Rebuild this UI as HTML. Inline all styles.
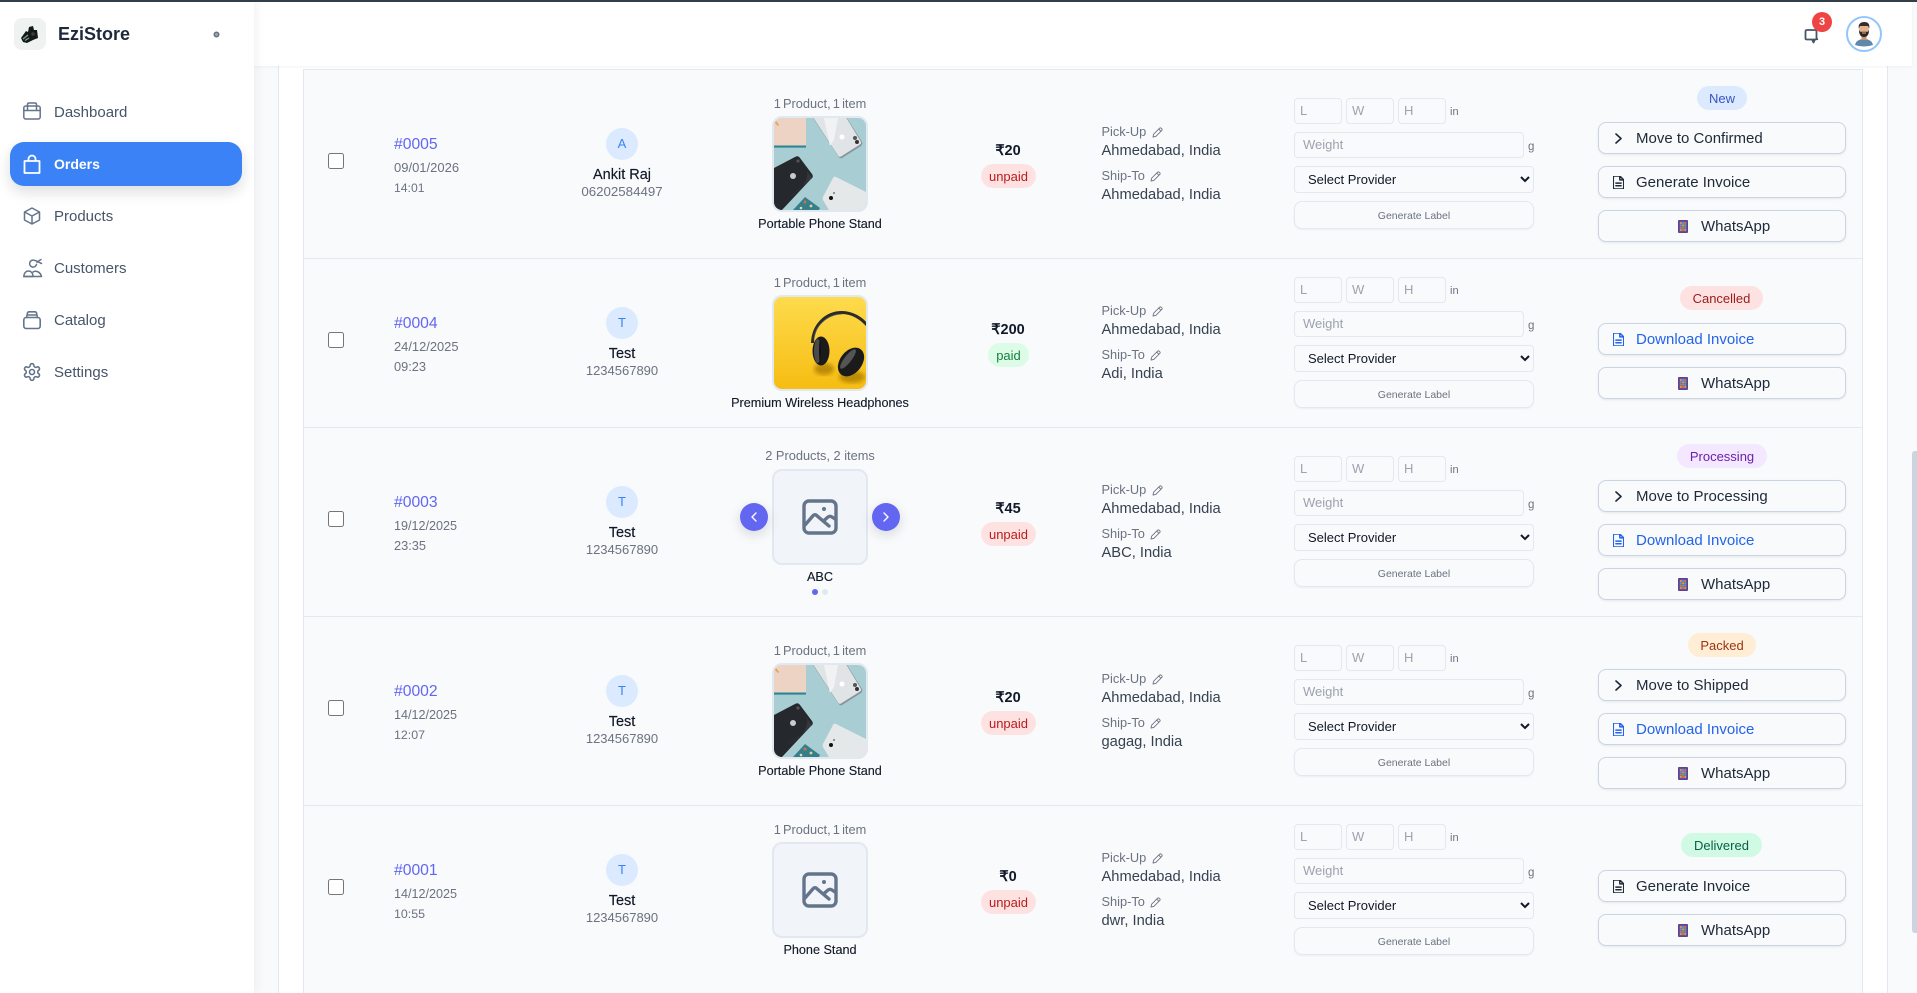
<!DOCTYPE html>
<html lang="en"><head><meta charset="utf-8"><title>EziStore Orders</title>
<style>
html,body{margin:0;padding:0;width:1917px;height:993px;overflow:hidden;background:#f8fafc;font-family:"Liberation Sans",sans-serif;color:#111827}
*{box-sizing:border-box}
.a{position:absolute;white-space:nowrap;line-height:20px}
svg{position:absolute;display:block;overflow:visible}
#bar{position:absolute;left:0;top:0;width:1917px;height:2px;background:#333f48;z-index:9}
#side{position:absolute;left:0;top:0;width:254px;height:993px;background:#fff;box-shadow:3px 0 10px rgba(15,23,42,.05);z-index:6}
#head{position:absolute;left:254px;top:0;width:1658px;height:66px;background:#fff;box-shadow:0 1px 3px rgba(15,23,42,.05);z-index:5}
#card{position:absolute;left:278px;top:60px;width:1610px;height:933px;background:#fff;border-left:1px solid #e2e8f0;border-right:1px solid #e2e8f0}
#thumb{position:absolute;left:1912px;top:451px;width:5px;height:482px;background:#cbd5e1;border-radius:3px 0 0 3px}
.menu{position:absolute;left:54px;font-size:15px;line-height:20px;color:#475569}
.row{position:absolute;left:0;width:1917px}
.bg{position:absolute;left:303px;top:0;width:1560px;height:100%;background:#f8fafc;border:1px solid #e2e8f0;border-width:1px 1px 0 1px}
.in{position:absolute;left:0;width:1917px;height:0}
.id{left:394px;top:66px;font-size:15.7px;color:#6366f1}
.dt{left:394px;top:89px;font-size:13px;color:#6b7280}
.tm{left:394px;top:109px;font-size:12.8px;color:#6b7280}
.av{position:absolute;left:606px;top:59px;width:32px;height:32px;border-radius:50%;background:#dbeafe;color:#3b82f6;font-size:13px;line-height:32px;text-align:center}
.nm{left:522px;width:200px;text-align:center;top:96px;font-size:14.5px;color:#111827;-webkit-text-stroke:.15px #111827}
.ph{left:522px;width:200px;text-align:center;top:113px;font-size:13px;color:#6b7280}
.ct{left:720px;width:200px;text-align:center;top:25px;font-size:12.8px;color:#6b7280}
.ct.o{word-spacing:-1.4px}
.im{position:absolute;left:772px;top:47px;width:96px;height:96px;border:2px solid #e2e8f0;border-radius:10px;background:#f1f5f9;overflow:hidden}
.pn{left:720px;width:200px;text-align:center;top:145px;font-size:12.65px;color:#111827;-webkit-text-stroke:.12px #111827}
.am{left:958px;width:100px;text-align:center;top:72px;font-size:14.5px;font-weight:bold;color:#111827}
.st{position:absolute;top:95px;height:24px;border-radius:12px;text-align:center;font-size:13px;line-height:25px;white-space:nowrap}
.un{left:981px;width:55px;background:#fee2e2;color:#b91c1c}
.pd{left:988px;width:41px;background:#dcfce7;color:#15803d}
.l1{left:1101.500px;top:53px;font-size:12.8px;color:#6b7280}
.v1{left:1101.500px;top:72px;font-size:14.7px;color:#374151}
.l2{left:1101.500px;top:97px;font-size:12.8px;color:#6b7280}
.v2{left:1101.500px;top:116px;font-size:14.7px;color:#374151}
input.t,select{position:absolute;font-family:"Liberation Sans",sans-serif;border:1px solid #e2e8f0;background:#f8fafc;margin:0;outline:0}
input.t{height:26px;top:29px;width:48px;padding:0 0 1px 5px;font-size:13px;border-radius:4px}
input.t::placeholder{color:#9ca3af;opacity:1}
input.w{left:1294px;top:63px;width:230px;padding-left:8px}
select{left:1294px;top:97px;width:240px;height:27px;font-size:13px;padding:0 9px;border-radius:4px;color:#111827}
.un2{left:1450px;top:33px;font-size:11px;color:#6b7280}
.g{left:1528px;top:68px;font-size:11.5px;color:#6b7280}
.gen{position:absolute;left:1294px;top:132px;width:240px;height:28px;border:1px solid #e2e8f0;border-radius:8px;font-size:10.5px;padding-top:1px;line-height:27px;text-align:center;color:#6b7280;box-shadow:0 1px 2px rgba(15,23,42,.05)}
.cb{position:absolute;left:328px;top:84px;width:16px;height:16px;margin:0}
.pill{position:absolute;top:17px;height:24px;border-radius:12px;font-size:13px;line-height:25px;text-align:center;white-space:nowrap}
.b{position:absolute;left:1598px;width:248px;height:32px;border:1px solid #cbd5e1;border-radius:8px;background:#f8fafc;box-shadow:0 1px 2px rgba(15,23,42,.08);font-size:15px;line-height:31px;color:#1f2937;white-space:nowrap}
.b span{position:absolute;left:37px;top:0}
.b.wa span{left:102px}
.b.bl{color:#2563eb}
.dot{position:absolute;width:6px;height:6px;border-radius:50%}
.arr{position:absolute;width:28px;height:28px;border-radius:50%;background:#6366f1;top:76px;box-shadow:0 4px 12px rgba(15,23,42,.14)}
</style></head><body>
<svg width="0" height="0" style="position:absolute">
<defs>
<symbol id="phones" viewBox="0 0 92 92" preserveAspectRatio="none">
<rect width="92" height="92" fill="#a8ced3"/>
<rect x="0" y="27" width="32" height="2.600" fill="#2a8791"/>
<rect width="32" height="27.500" fill="#ecd3c3"/>
<path d="M2 3l3 4-1 1-3-3z" fill="#e8a24a"/>
<path d="M39 0H73L88 24Q89 26 87 28L68 40Q66 41 64 38Z" fill="#87939a"/>
<path d="M39.500 0H72.500L87 24Q87.500 25.500 86 26.500L67 38.500Q65 39.500 64 37.500Z" fill="#e1e4e6"/>
<path d="M50 0H64L60 22 56 28Z" fill="#f0f2f3"/>
<circle cx="81" cy="20" r="2" fill="#555"/><circle cx="83" cy="24" r="2" fill="#333"/>
<circle cx="68" cy="19" r="2.500" fill="#fff"/>
<path d="M0 50L21 39Q24 37 26 40L38 56Q40 59 37 61L8 92H0Z" fill="#25282d"/>
<path d="M14 80L38 60 33 53Q36 66 14 80Z" fill="#34383e"/>
<circle cx="19" cy="58" r="3" fill="#c9cbcd"/>
<circle cx="24" cy="43" r="1.600" fill="#555"/>
<path d="M62 59L90 73 92 74V92H55L49 82Q48 80 50 77L59 60Q60 58 62 59Z" fill="#e5e8e9"/>
<circle cx="57" cy="80" r="2" fill="#111"/><circle cx="60" cy="75" r="1" fill="#777"/>
<path d="M31 79L46 90 45 92H19Z" fill="#34808a"/>
<circle cx="31" cy="84" r="1.500" fill="#d9694f"/><circle cx="37" cy="88" r="1.400" fill="#f0c9a0"/><circle cx="27" cy="90" r="1.300" fill="#e8d7c0"/>
</symbol>
<linearGradient id="yl" x1="0" y1="0" x2="0" y2="1"><stop offset="0" stop-color="#fedb4d"/><stop offset="1" stop-color="#f6bd12"/></linearGradient>
<filter id="bl"><feGaussianBlur stdDeviation="2"/></filter>
<symbol id="phones2" viewBox="0 0 92 92" preserveAspectRatio="none">
<rect width="92" height="92" fill="url(#yl)"/>
<ellipse cx="50" cy="72" rx="10" ry="6" fill="#a37400" opacity=".7" filter="url(#bl)"/>
<ellipse cx="78" cy="80" rx="13" ry="6" fill="#a37400" opacity=".7" filter="url(#bl)"/>
<path d="M38.500 46C39 28 52 15.500 68 15.500 78 15.500 87 21 93 28" fill="none" stroke="#2b2b2b" stroke-width="3"/>
<path d="M40 42C41 29 53 17.500 68 17" fill="none" stroke="#5a5a5a" stroke-width=".7"/>
<ellipse cx="47" cy="54" rx="8.500" ry="14.500" fill="#1b1b1b"/>
<ellipse cx="43.500" cy="54" rx="3.500" ry="12" fill="#4a4a4a"/>
<ellipse cx="46" cy="54" rx="1" ry="11" fill="#111"/>
<ellipse cx="77" cy="65" rx="11" ry="16" transform="rotate(38 77 65)" fill="#1b1b1b"/>
<ellipse cx="74" cy="62" rx="3.500" ry="12" transform="rotate(38 74 62)" fill="#555"/>
</symbol>
<symbol id="ph" viewBox="0 0 36 36">
<g fill="none" stroke="#64748b" stroke-width="3.400" stroke-linecap="round" stroke-linejoin="round">
<rect x="2" y="2" width="32" height="32" rx="5"/>
<path d="M3 26L11 16.800Q13 14.600 15 16.800L27 27"/>
<path d="M22 21.500L26 18Q28 16.600 30 18L33.800 20.500"/></g>
<circle cx="22" cy="10" r="2" fill="#64748b"/>
</symbol>
<symbol id="pen" viewBox="0 0 11 11">
<path d="M1 10L1.600 7.200 7.600 1.200Q8.400.5 9.200 1.200L9.800 1.800Q10.500 2.600 9.800 3.400L3.800 9.400ZM6.800 2.200L8.800 4.200" fill="none" stroke="#6b7280" stroke-width=".9" stroke-linejoin="round"/>
</symbol>
<symbol id="doc" viewBox="4 2 16 20">
<path d="M14 2H6a2 2 0 0 0-2 2v16a2 2 0 0 0 2 2h12a2 2 0 0 0 2-2V8zM14 2v6h6M16 13H8M16 17H8" fill="none" stroke="currentColor" stroke-width="2.300" stroke-linecap="round" stroke-linejoin="round"/>
</symbol>
<symbol id="chev" viewBox="0 0 7 11">
<path d="M1 1L6 5.500 1 10" fill="none" stroke="#1f2937" stroke-width="1.600" stroke-linecap="round" stroke-linejoin="round"/>
</symbol>
<symbol id="wa" viewBox="0 0 10 13">
<rect width="10" height="13" rx="1" fill="#5b4390"/>
<rect x="1.500" y="1.500" width="7" height="10" fill="#7c5ca8"/>
<g><rect x="2" y="2.200" width="1.700" height="1.700" fill="#e8a23c"/><rect x="4.200" y="2.200" width="1.700" height="1.700" fill="#4f9de0"/><rect x="6.400" y="2.200" width="1.700" height="1.700" fill="#e8703c"/>
<rect x="2" y="4.500" width="1.700" height="1.700" fill="#4f9de0"/><rect x="4.200" y="4.500" width="1.700" height="1.700" fill="#e8a23c"/><rect x="6.400" y="4.500" width="1.700" height="1.700" fill="#5fb56a"/>
<rect x="2" y="6.800" width="1.700" height="1.700" fill="#e8703c"/><rect x="4.200" y="6.800" width="1.700" height="1.700" fill="#5fb56a"/><rect x="6.400" y="6.800" width="1.700" height="1.700" fill="#4f9de0"/>
<rect x="2" y="9.100" width="1.700" height="1.700" fill="#e8a23c"/><rect x="4.200" y="9.100" width="1.700" height="1.700" fill="#e8703c"/><rect x="6.400" y="9.100" width="1.700" height="1.700" fill="#e8a23c"/></g>
</symbol>
</defs></svg>

<div id="card"></div>
<div id="thumb"></div>

<div class="row" style="top:69px;height:189px"><div class="bg"></div>
<input class="cb" type="checkbox">
<div class="in" style="top:0">
<div class="a id">#0005</div><div class="a dt">09/01/2026</div><div class="a tm" style="font-size:12.2px">14:01</div>
<div class="av">A</div><div class="a nm">Ankit Raj</div><div class="a ph" style="font-size:13.3px">06202584497</div>
<div class="a ct o">1 Product, 1 item</div>
<div class="im"><svg width="92" height="92"><use href="#phones"/></svg></div>
<div class="a pn">Portable Phone Stand</div>
<div class="a am">₹20</div><div class="st un">unpaid</div>
<div class="a l1">Pick-Up</div><svg style="left:1152px;top:58px" width="11" height="11"><use href="#pen"/></svg><div class="a v1">Ahmedabad, India</div>
<div class="a l2">Ship-To</div><svg style="left:1150px;top:102px" width="11" height="11"><use href="#pen"/></svg><div class="a v2">Ahmedabad, India</div>
<input class="t" style="left:1294px" placeholder="L"><input class="t" style="left:1346px" placeholder="W"><input class="t" style="left:1398px" placeholder="H"><div class="a un2">in</div>
<input class="t w" placeholder="Weight"><div class="a g">g</div>
<select><option>Select Provider</option></select>
<div class="gen">Generate Label</div>
</div>
<div class="pill" style="left:1697px;width:50px;background:#dbeafe;color:#3b52c4">New</div>
<div class="b" style="top:53px"><svg style="left:16px;top:10px" width="7" height="11"><use href="#chev"/></svg><span>Move to Confirmed</span></div>
<div class="b" style="top:97px"><svg style="left:14px;top:9px;color:#1f2937" width="11" height="13"><use href="#doc"/></svg><span>Generate Invoice</span></div>
<div class="b wa" style="top:141px"><svg style="left:79px;top:9px" width="10" height="13"><use href="#wa"/></svg><span>WhatsApp</span></div>
</div>

<div class="row" style="top:258px;height:169px"><div class="bg"></div>
<input class="cb" type="checkbox" style="top:74px">
<div class="in" style="top:-10px">
<div class="a id">#0004</div><div class="a dt" style="font-size:12.900px">24/12/2025</div><div class="a tm">09:23</div>
<div class="av">T</div><div class="a nm">Test</div><div class="a ph">1234567890</div>
<div class="a ct o">1 Product, 1 item</div>
<div class="im"><svg width="92" height="92"><use href="#phones2"/></svg></div>
<div class="a pn">Premium Wireless Headphones</div>
<div class="a am">₹200</div><div class="st pd">paid</div>
<div class="a l1">Pick-Up</div><svg style="left:1152px;top:58px" width="11" height="11"><use href="#pen"/></svg><div class="a v1">Ahmedabad, India</div>
<div class="a l2">Ship-To</div><svg style="left:1150px;top:102px" width="11" height="11"><use href="#pen"/></svg><div class="a v2">Adi, India</div>
<input class="t" style="left:1294px" placeholder="L"><input class="t" style="left:1346px" placeholder="W"><input class="t" style="left:1398px" placeholder="H"><div class="a un2">in</div>
<input class="t w" placeholder="Weight"><div class="a g">g</div>
<select><option>Select Provider</option></select>
<div class="gen">Generate Label</div>
</div>
<div class="pill" style="left:1680px;width:83px;top:28px;background:#fee2e2;color:#991b1b">Cancelled</div>
<div class="b bl" style="top:65px"><svg style="left:14px;top:9px;color:#2563eb" width="11" height="13"><use href="#doc"/></svg><span>Download Invoice</span></div>
<div class="b wa" style="top:109px"><svg style="left:79px;top:9px" width="10" height="13"><use href="#wa"/></svg><span>WhatsApp</span></div>
</div>

<div class="row" style="top:427px;height:189px"><div class="bg"></div>
<input class="cb" type="checkbox">
<div class="in" style="top:0">
<div class="a id">#0003</div><div class="a dt" style="font-size:12.600px">19/12/2025</div><div class="a tm">23:35</div>
<div class="av">T</div><div class="a nm">Test</div><div class="a ph">1234567890</div>
<div class="a ct" style="top:19px">2 Products, 2 items</div>
<div class="im" style="top:42px"><svg style="left:28px;top:28px" width="36" height="36"><use href="#ph"/></svg></div>
<div class="arr" style="left:740px"><svg style="left:11px;top:9px" width="6" height="10" viewBox="0 0 6 10"><path d="M5 1L1 5 5 9" fill="none" stroke="#fff" stroke-width="1.400" stroke-linecap="round" stroke-linejoin="round"/></svg></div>
<div class="arr" style="left:872px"><svg style="left:11px;top:9px" width="6" height="10" viewBox="0 0 6 10"><path d="M1 1L5 5 1 9" fill="none" stroke="#fff" stroke-width="1.400" stroke-linecap="round" stroke-linejoin="round"/></svg></div>
<div class="a pn" style="top:140px">ABC</div>
<div class="dot" style="left:812px;top:162px;background:#6366f1"></div><div class="dot" style="left:822px;top:162px;background:#e2e8f0"></div>
<div class="a am">₹45</div><div class="st un">unpaid</div>
<div class="a l1">Pick-Up</div><svg style="left:1152px;top:58px" width="11" height="11"><use href="#pen"/></svg><div class="a v1">Ahmedabad, India</div>
<div class="a l2">Ship-To</div><svg style="left:1150px;top:102px" width="11" height="11"><use href="#pen"/></svg><div class="a v2">ABC, India</div>
<input class="t" style="left:1294px" placeholder="L"><input class="t" style="left:1346px" placeholder="W"><input class="t" style="left:1398px" placeholder="H"><div class="a un2">in</div>
<input class="t w" placeholder="Weight"><div class="a g">g</div>
<select><option>Select Provider</option></select>
<div class="gen">Generate Label</div>
</div>
<div class="pill" style="left:1677px;width:90px;background:#f3e8ff;color:#6b21a8">Processing</div>
<div class="b" style="top:53px"><svg style="left:16px;top:10px" width="7" height="11"><use href="#chev"/></svg><span>Move to Processing</span></div>
<div class="b bl" style="top:97px"><svg style="left:14px;top:9px;color:#2563eb" width="11" height="13"><use href="#doc"/></svg><span>Download Invoice</span></div>
<div class="b wa" style="top:141px"><svg style="left:79px;top:9px" width="10" height="13"><use href="#wa"/></svg><span>WhatsApp</span></div>
</div>

<div class="row" style="top:616px;height:189px"><div class="bg"></div>
<input class="cb" type="checkbox">
<div class="in" style="top:0">
<div class="a id">#0002</div><div class="a dt" style="font-size:12.600px">14/12/2025</div><div class="a tm" style="font-size:12.400px">12:07</div>
<div class="av">T</div><div class="a nm">Test</div><div class="a ph">1234567890</div>
<div class="a ct o">1 Product, 1 item</div>
<div class="im"><svg width="92" height="92"><use href="#phones"/></svg></div>
<div class="a pn">Portable Phone Stand</div>
<div class="a am">₹20</div><div class="st un">unpaid</div>
<div class="a l1">Pick-Up</div><svg style="left:1152px;top:58px" width="11" height="11"><use href="#pen"/></svg><div class="a v1">Ahmedabad, India</div>
<div class="a l2">Ship-To</div><svg style="left:1150px;top:102px" width="11" height="11"><use href="#pen"/></svg><div class="a v2">gagag, India</div>
<input class="t" style="left:1294px" placeholder="L"><input class="t" style="left:1346px" placeholder="W"><input class="t" style="left:1398px" placeholder="H"><div class="a un2">in</div>
<input class="t w" placeholder="Weight"><div class="a g">g</div>
<select><option>Select Provider</option></select>
<div class="gen">Generate Label</div>
</div>
<div class="pill" style="left:1688px;width:68px;background:#ffedd5;color:#9a3412">Packed</div>
<div class="b" style="top:53px"><svg style="left:16px;top:10px" width="7" height="11"><use href="#chev"/></svg><span>Move to Shipped</span></div>
<div class="b bl" style="top:97px"><svg style="left:14px;top:9px;color:#2563eb" width="11" height="13"><use href="#doc"/></svg><span>Download Invoice</span></div>
<div class="b wa" style="top:141px"><svg style="left:79px;top:9px" width="10" height="13"><use href="#wa"/></svg><span>WhatsApp</span></div>
</div>

<div class="row" style="top:805px;height:188px"><div class="bg"></div>
<input class="cb" type="checkbox" style="top:74px">
<div class="in" style="top:-10px">
<div class="a id">#0001</div><div class="a dt" style="font-size:12.600px">14/12/2025</div><div class="a tm" style="font-size:12.400px">10:55</div>
<div class="av">T</div><div class="a nm">Test</div><div class="a ph">1234567890</div>
<div class="a ct o">1 Product, 1 item</div>
<div class="im"><svg style="left:28px;top:28px" width="36" height="36"><use href="#ph"/></svg></div>
<div class="a pn">Phone Stand</div>
<div class="a am">₹0</div><div class="st un">unpaid</div>
<div class="a l1">Pick-Up</div><svg style="left:1152px;top:58px" width="11" height="11"><use href="#pen"/></svg><div class="a v1">Ahmedabad, India</div>
<div class="a l2">Ship-To</div><svg style="left:1150px;top:102px" width="11" height="11"><use href="#pen"/></svg><div class="a v2">dwr, India</div>
<input class="t" style="left:1294px" placeholder="L"><input class="t" style="left:1346px" placeholder="W"><input class="t" style="left:1398px" placeholder="H"><div class="a un2">in</div>
<input class="t w" placeholder="Weight"><div class="a g">g</div>
<select><option>Select Provider</option></select>
<div class="gen">Generate Label</div>
</div>
<div class="pill" style="left:1681px;width:81px;top:28px;background:#d1fae5;color:#065f46">Delivered</div>
<div class="b" style="top:65px"><svg style="left:14px;top:9px;color:#1f2937" width="11" height="13"><use href="#doc"/></svg><span>Generate Invoice</span></div>
<div class="b wa" style="top:109px"><svg style="left:79px;top:9px" width="10" height="13"><use href="#wa"/></svg><span>WhatsApp</span></div>
</div>

<div id="head">
<svg style="left:1550px;top:28px" width="16" height="16" viewBox="0 0 16 16"><path d="M3 2H11Q12.500 2 12.500 3.500V10.500Q12.500 11.500 11 11.500H3Q1.500 11.500 1.500 10.500V3.500Q1.500 2 3 2ZM8 11.500L9.500 14.500 11 11.500 14 11" fill="none" stroke="#475569" stroke-width="1.800" stroke-linejoin="round"/></svg>
<div style="position:absolute;left:1558px;top:12px;width:20px;height:20px;border-radius:50%;background:#ef4444;color:#fff;font-size:11px;font-weight:bold;line-height:20px;text-align:center">3</div>
<div style="position:absolute;left:1592px;top:16px;width:36px;height:36px;border:2px solid #93c5fd;border-radius:50%;background:#fff;overflow:hidden">
<svg style="left:0;top:0" width="32" height="32" viewBox="0 0 32 32">
<path d="M7 27C8 22.500 12 21 16 21S24 22.500 25 27Q16 30 7 27Z" fill="#5f88ab"/>
<rect x="13.500" y="16" width="5" height="6" fill="#c9956f"/>
<ellipse cx="16" cy="11.500" rx="5" ry="6.500" fill="#e4b48f"/>
<path d="M11 12C11 17 13 19 16 19S21 17 21 12L20 13.800H12Z" fill="#2f2622"/>
<path d="M10.800 10.500C10 6 12.500 4 16.300 4S22 6 21.200 10.500L20 8H12Z" fill="#3a2b28"/>
<rect x="14" y="14.500" width="4" height="1" fill="#e4b48f"/>
</svg></div>
</div>

<div id="side">
<div style="position:absolute;left:14px;top:18px;width:32px;height:32px;border-radius:8px;background:#eef2f1"></div>
<svg style="left:20px;top:24px" width="20" height="20" viewBox="0 0 20 20"><path d="M1 14L6 7 8 8 9 3 13 2 14 6 17 6 18 14 13 16 7 19 3 18Z" fill="#14181a"/><path d="M3 15L8 11M5 16.500L9 14" stroke="#7ea884" stroke-width="1.200"/><circle cx="13" cy="10" r="1.800" fill="#3d3d3d"/></svg>
<div class="a" style="left:58px;top:24px;font-size:18px;font-weight:bold;color:#1e293b">EziStore</div>
<svg style="left:212.500px;top:30.500px" width="7" height="7" viewBox="0 0 7 7"><circle cx="3.500" cy="3.500" r="3" fill="#6b7280"/><circle cx="3.500" cy="3.500" r="1.500" fill="#9ca3af"/></svg>

<svg style="left:23px;top:102px" width="18" height="18" viewBox="0 0 18 18"><g fill="none" stroke="#64748b" stroke-width="1.500" stroke-linejoin="round"><rect x=".8" y="4" width="16.400" height="13" rx="2"/><path d="M.8 8.500H17.200"/><path d="M4.500 8V2.500Q4.500 1 6 1H12Q13.500 1 13.500 2.500V8"/></g></svg>
<div class="menu" style="top:103px">Dashboard</div>

<div style="position:absolute;left:10px;top:142px;width:232px;height:44px;border-radius:14px;background:#3b82f6;box-shadow:0 6px 14px rgba(15,23,42,.14)"></div>
<svg style="left:23px;top:154px" width="18" height="20" viewBox="0 0 18 20"><g fill="none" stroke="#fff" stroke-width="1.800" stroke-linejoin="round"><rect x="1.500" y="7" width="15" height="12"/><path d="M5.500 7V5A3.500 3.500 0 0 1 12.500 5V7"/></g></svg>
<div class="menu" style="top:154px;color:#fff;font-weight:bold;font-size:14px">Orders</div>

<svg style="left:23px;top:207px" width="18" height="18" viewBox="0 0 18 18"><path d="M9 1L16.500 5V13L9 17 1.500 13V5ZM1.500 5L9 9 16.500 5M9 9V17" fill="none" stroke="#64748b" stroke-width="1.500" stroke-linejoin="round"/></svg>
<div class="menu" style="top:207px">Products</div>

<svg style="left:23px;top:258px" width="20" height="20" viewBox="0 0 20 20"><g fill="none" stroke="#64748b" stroke-width="1.500" stroke-linecap="round" stroke-linejoin="round"><path d="M.8 18.500C1 15 3 13 5.500 13S10 15 10 18.500Z"/><path d="M10 14C12 12.500 17 13 18.500 18.500H.8"/><path d="M13.500 6.500A3.500 3.500 0 1 1 11 2.200C14 2.500 15 4 18.500 5.500M14 4.500C15 3.500 16 2.500 18 1.500"/></g></svg>
<div class="menu" style="top:259px">Customers</div>

<svg style="left:23px;top:311px" width="18" height="18" viewBox="0 0 18 18"><g fill="none" stroke="#64748b" stroke-width="1.600" stroke-linejoin="round"><rect x=".8" y="6.500" width="16.400" height="11" rx="2.500"/><path d="M3.500 6.500L4.500 2Q4.800 .8 6 .8H12Q13.200 .8 13.500 2L14.500 6.500M4 4H14"/></g></svg>
<div class="menu" style="top:311px">Catalog</div>

<svg style="left:22px;top:362px" width="20" height="20" viewBox="0 0 24 24"><g fill="none" stroke="#64748b" stroke-width="1.900" stroke-linecap="round" stroke-linejoin="round"><path d="M12.220 2h-.44a2 2 0 0 0-2 2v.18a2 2 0 0 1-1 1.730l-.43.25a2 2 0 0 1-2 0l-.15-.08a2 2 0 0 0-2.730.73l-.22.38a2 2 0 0 0 .73 2.730l.15.1a2 2 0 0 1 1 1.720v.51a2 2 0 0 1-1 1.740l-.15.09a2 2 0 0 0-.73 2.730l.22.38a2 2 0 0 0 2.730.73l.15-.08a2 2 0 0 1 2 0l.43.25a2 2 0 0 1 1 1.730V20a2 2 0 0 0 2 2h.44a2 2 0 0 0 2-2v-.18a2 2 0 0 1 1-1.730l.43-.25a2 2 0 0 1 2 0l.15.08a2 2 0 0 0 2.730-.73l.22-.39a2 2 0 0 0-.73-2.730l-.15-.08a2 2 0 0 1-1-1.740v-.5a2 2 0 0 1 1-1.740l.15-.09a2 2 0 0 0 .73-2.730l-.22-.38a2 2 0 0 0-2.730-.73l-.15.08a2 2 0 0 1-2 0l-.43-.25a2 2 0 0 1-1-1.730V4a2 2 0 0 0-2-2z"/><circle cx="12" cy="12" r="3"/></g></svg>
<div class="menu" style="top:363px">Settings</div>
</div>
<div id="bar"></div>
</body></html>
